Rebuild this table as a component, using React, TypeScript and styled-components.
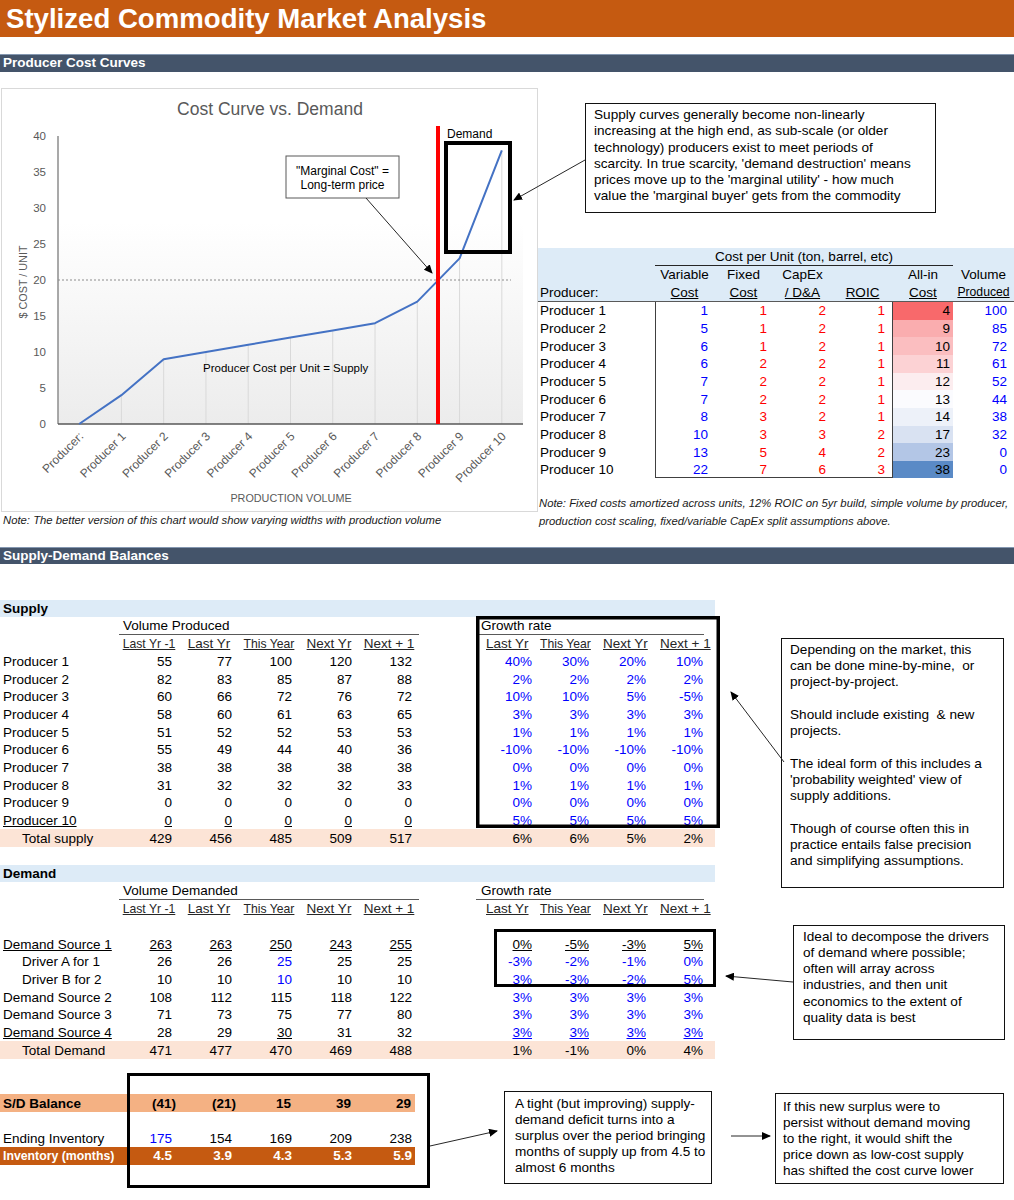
import React from 'react';
import styled, { createGlobalStyle } from 'styled-components';

const R = 17.67;
const FONT = '"Liberation Sans", Arial, sans-serif';
const BLUE = '#0000ff';
const RED = '#ff0000';

const GlobalStyle = createGlobalStyle`
  *, *::before, *::after { box-sizing: border-box; }
  html, body { margin: 0; padding: 0; background: #fff; }
  body { font-family: ${FONT}; font-size: 13.5px; color: #000; }
`;

const Page = styled.div`
  position: relative;
  width: 1014px;
  height: 1200px;
  overflow: hidden;
`;

const TitleBar = styled.h1`
  margin: 0;
  height: 37px;
  padding-left: 6px;
  background: #c55a11;
  color: #fff;
  font-size: 27.6px;
  font-weight: 700;
  line-height: 38px;
  white-space: nowrap;
`;

const SectionBar = styled.h2<{ $mt: number }>`
  margin: ${p => p.$mt}px 0 0;
  height: ${R}px;
  padding-left: 3px;
  background: #44546a;
  border-top: 1px solid #8497b0;
  color: #fff;
  font-size: 13.5px;
  font-weight: 700;
  line-height: ${R - 1}px;
  white-space: nowrap;
`;

/* ---------- top area ---------- */
const TopArea = styled.div`
  display: flex;
  align-items: flex-start;
  margin-top: 16.3px;
`;

const ChartCol = styled.div`
  width: 538px;
  flex: none;
  padding-left: 1px;
  display: flex;
  flex-direction: column;
`;

const ChartFrame = styled.div`
  width: 537px;
  height: 424px;
  border: 1px solid #d9d9d9;
  background: #fff;
  svg { display: block; }
`;

const Note = styled.div<{ $pl: number }>`
  padding-left: ${p => p.$pl}px;
  font-style: italic;
  font-size: 11.3px;
  line-height: ${R}px;
  color: #1a1a1a;
  white-space: nowrap;
`;

const NoteBlock = styled.div`
  margin-top: 17px;
`;

const RightCol = styled.div`
  width: 476px;
  flex: none;
  display: flex;
  flex-direction: column;
`;

const Callout = styled.div<{ $w: number; $h: number; $mt: number; $ml: number; $pad: string; $lh: number }>`
  flex: none;
  width: ${p => p.$w}px;
  height: ${p => p.$h}px;
  margin-top: ${p => p.$mt}px;
  margin-left: ${p => p.$ml}px;
  padding: ${p => p.$pad};
  border: 1.5px solid #111;
  background: #fff;
  font-size: 13.6px;
  line-height: ${p => p.$lh}px;
  white-space: pre;
  color: #000;
`;

/* ---------- cost table ---------- */
const CT_COLS = '117px 59px 59px 59px 61px 60px 61px';

const CostTable = styled.div`
  margin-top: 35px;
  width: 476px;
`;

const CostHead = styled.div`
  display: grid;
  grid-template-columns: ${CT_COLS};
  grid-template-rows: repeat(3, ${R}px);
  background: #ddebf7;
  border-bottom: 1px solid #595959;
`;

const HeadCell = styled.div<{ $col: string; $row: number; $align?: 'l' | 'c'; $ul?: boolean; $size?: number; $line?: boolean }>`
  grid-column: ${p => p.$col};
  grid-row: ${p => p.$row};
  display: flex;
  align-items: center;
  justify-content: ${p => (p.$align === 'l' ? 'flex-start' : 'center')};
  padding-left: ${p => (p.$align === 'l' ? 2 : 0)}px;
  font-size: ${p => p.$size ?? 13.5}px;
  text-decoration: ${p => (p.$ul ? 'underline' : 'none')};
  text-underline-offset: 1px;
  border-bottom: ${p => (p.$line ? '1.5px solid #262626' : '0')};
  white-space: nowrap;
`;

const CostRow = styled.div`
  display: grid;
  grid-template-columns: ${CT_COLS};
  height: ${R}px;
`;

const CostCell = styled.div<{ $color?: string; $bg?: string; $pr?: number; $pl?: number; $bl?: boolean; $br?: boolean; $bb?: boolean; $left?: boolean }>`
  display: flex;
  align-items: center;
  justify-content: ${p => (p.$left ? 'flex-start' : 'flex-end')};
  padding-right: ${p => p.$pr ?? 0}px;
  padding-left: ${p => p.$pl ?? 0}px;
  color: ${p => p.$color ?? '#000'};
  background: ${p => p.$bg ?? 'transparent'};
  border-left: ${p => (p.$bl ? '1px solid #404040' : '0')};
  border-right: ${p => (p.$br ? '1px solid #404040' : '0')};
  border-bottom: ${p => (p.$bb ? '1px solid #404040' : '0')};
  white-space: nowrap;
`;

/* ---------- supply / demand sheet ---------- */
const SHEET_COLS = '119px repeat(5, 60px) 57px repeat(4, 57px) 11px';
const BAL_COLS = '119px repeat(4, 60px) 56px';

const SDArea = styled.div`
  padding-top: ${2 * R}px;
`;

const UpperGrid = styled.div`
  display: grid;
  grid-template-columns: 715px 1fr;
  align-items: start;
`;

const LeftCol = styled.div`
  display: flex;
  flex-direction: column;
`;

const RightStack = styled.div`
  display: flex;
  flex-direction: column;
`;

const SheetRow = styled.div<{ $bg?: string }>`
  display: grid;
  grid-template-columns: ${SHEET_COLS};
  height: ${R}px;
  background: ${p => p.$bg ?? 'transparent'};
`;

const BalRow = styled.div<{ $bg?: string }>`
  display: grid;
  grid-template-columns: ${BAL_COLS};
  height: ${R}px;
  background: ${p => p.$bg ?? 'transparent'};
`;

type CellProps = {
  $col?: string;
  $align?: 'l' | 'r' | 'c';
  $pl?: number;
  $pr?: number;
  $color?: string;
  $bold?: boolean;
  $size?: number;
  $ul?: boolean;
  $line?: boolean;
};

const Cell = styled.div<CellProps>`
  grid-column: ${p => p.$col ?? 'auto'};
  display: flex;
  align-items: center;
  justify-content: ${p => (p.$align === 'r' ? 'flex-end' : p.$align === 'c' ? 'center' : 'flex-start')};
  padding-left: ${p => p.$pl ?? 0}px;
  padding-right: ${p => p.$pr ?? 0}px;
  color: ${p => p.$color ?? '#000'};
  font-weight: ${p => (p.$bold ? 700 : 400)};
  font-size: ${p => p.$size ?? 13.5}px;
  text-decoration: ${p => (p.$ul ? 'underline' : 'none')};
  text-underline-offset: 1px;
  white-space: nowrap;
  border-bottom: ${p => (p.$line ? '1px solid #595959' : '0')};
`;

const BottomRow = styled.div`
  display: flex;
  align-items: flex-start;
`;

const BalanceTable = styled.div`
  width: 415px;
  flex: none;
  display: flex;
  flex-direction: column;
`;

const Overlay = styled.svg`
  position: absolute;
  left: 0;
  top: 0;
  pointer-events: none;
`;

/* ---------- data ---------- */
const parse = (raw: string) => {
  let s = raw;
  let ul = false;
  let blue = false;
  while (s[0] === '_' || s[0] === '*') {
    if (s[0] === '_') ul = true;
    else blue = true;
    s = s.slice(1);
  }
  return { t: s, ul, blue };
};

const supplyRows: [string, string, string][] = [
  ['Producer 1', '55 77 100 120 132', '*40% *30% *20% *10%'],
  ['Producer 2', '82 83 85 87 88', '*2% *2% *2% *2%'],
  ['Producer 3', '60 66 72 76 72', '*10% *10% *5% *-5%'],
  ['Producer 4', '58 60 61 63 65', '*3% *3% *3% *3%'],
  ['Producer 5', '51 52 52 53 53', '*1% *1% *1% *1%'],
  ['Producer 6', '55 49 44 40 36', '*-10% *-10% *-10% *-10%'],
  ['Producer 7', '38 38 38 38 38', '*0% *0% *0% *0%'],
  ['Producer 8', '31 32 32 32 33', '*1% *1% *1% *1%'],
  ['Producer 9', '0 0 0 0 0', '*0% *0% *0% *0%'],
  ['_Producer 10', '_0 _0 _0 _0 _0', '_*5% _*5% _*5% _*5%'],
];

const demandRows: [string, number, string, string][] = [
  ['_Demand Source 1', 3, '_263 _263 _250 _243 _255', '_0% _-5% _-3% _5%'],
  ['Driver A for 1', 22, '26 26 *25 25 25', '*-3% *-2% *-1% *0%'],
  ['Driver B for 2', 22, '10 10 *10 10 10', '_*3% _*-3% _*-2% _*5%'],
  ['Demand Source 2', 3, '108 112 115 118 122', '*3% *3% *3% *3%'],
  ['Demand Source 3', 3, '71 73 75 77 80', '*3% *3% *3% *3%'],
  ['_Demand Source 4', 3, '28 29 _30 31 32', '_*3% _*3% _*3% _*3%'],
];

const costRows = [
  [1, 1, 2, 1, 4, 100],
  [5, 1, 2, 1, 9, 85],
  [6, 1, 2, 1, 10, 72],
  [6, 2, 2, 1, 11, 61],
  [7, 2, 2, 1, 12, 52],
  [7, 2, 2, 1, 13, 44],
  [8, 3, 2, 1, 14, 38],
  [10, 3, 3, 2, 17, 32],
  [13, 5, 4, 2, 23, 0],
  [22, 7, 6, 3, 38, 0],
];
const heat = ['#f8696b', '#faadaf', '#fbbec0', '#fcd2d4', '#fcedef', '#fbfbfe', '#edf1f9', '#d9e2f2', '#b3c6e6', '#5a8ac6'];

const VCOLS = ['2', '3', '4', '5', '6'];
const GCOLS = ['8', '9', '10', '11'];

const Values: React.FC<{ spec: string; cols: string[]; pr: number }> = ({ spec, cols, pr }) => (
  <>
    {spec.split(' ').map((raw, i) => {
      const v = parse(raw);
      return (
        <Cell key={i} $col={cols[i]} $align="r" $pr={pr} $ul={v.ul} $color={v.blue ? BLUE : '#000'}>
          {v.t}
        </Cell>
      );
    })}
  </>
);

const VolHeaders: React.FC = () => (
  <>
    <Cell $col="2" $align="c" $ul $size={12.2} $color="#262626">Last Yr -1</Cell>
    <Cell $col="3" $align="c" $ul $color="#262626">Last Yr</Cell>
    <Cell $col="4" $align="c" $ul $size={12.2} $color="#262626">This Year</Cell>
    <Cell $col="5" $align="c" $ul $color="#262626">Next Yr</Cell>
    <Cell $col="6" $align="c" $ul $color="#262626">Next + 1</Cell>
    <Cell $col="8" $pl={10} $ul $color="#262626">Last Yr</Cell>
    <Cell $col="9" $pl={7} $ul $size={12.2} $color="#262626">This Year</Cell>
    <Cell $col="10" $pl={13} $ul $color="#262626">Next Yr</Cell>
    <Cell $col="11" $pl={13} $ul $color="#262626">Next + 1</Cell>
  </>
);

/* ---------- chart ---------- */
const cats = ['Producer:', 'Producer 1', 'Producer 2', 'Producer 3', 'Producer 4', 'Producer 5', 'Producer 6', 'Producer 7', 'Producer 8', 'Producer 9', 'Producer 10'];
const curve = [0, 4, 9, 10, 11, 12, 13, 14, 17, 23, 38];
const X0 = 58;
const XW = 42.27;
const Y0 = 424;
const YS = 7.2;
const cx = (i: number) => X0 + (i + 0.5) * XW;
const cy = (v: number) => Y0 - v * YS;
const GRAY = '#595959';

const CostChart: React.FC = () => (
  <svg width={535} height={422} viewBox="2 89 535 422" fontFamily={FONT}>
    <defs>
      <linearGradient id="plotFill" x1="0" y1="0" x2="0" y2="1">
        <stop offset="0" stopColor="#ffffff" />
        <stop offset="0.3" stopColor="#ffffff" />
        <stop offset="1" stopColor="#ececec" />
      </linearGradient>
      <marker id="chartHead" markerWidth="9" markerHeight="8" refX="8" refY="4" orient="auto" markerUnits="userSpaceOnUse">
        <path d="M0,0 L9,4 L0,8 z" fill="#000" />
      </marker>
    </defs>
    <text x={270} y={109} textAnchor="middle" dominantBaseline="central" fontSize={17.5} fill={GRAY}>
      Cost Curve vs. Demand
    </text>
    <rect x={X0} y={136} width={465} height={288} fill="url(#plotFill)" />
    {curve.map((v, i) =>
      i === 0 ? null : <line key={i} x1={cx(i)} y1={cy(v)} x2={cx(i)} y2={Y0} stroke="#d9d9d9" strokeWidth={1} />
    )}
    <line x1={X0} y1={cy(20)} x2={511} y2={cy(20)} stroke="#8c8c8c" strokeWidth={1} strokeDasharray="2 2" />
    {[0, 5, 10, 15, 20, 25, 30, 35, 40].map(v => (
      <text key={v} x={46} y={cy(v)} textAnchor="end" dominantBaseline="central" fontSize={11.5} fill={GRAY}>
        {v}
      </text>
    ))}
    <line x1={X0} y1={136} x2={X0} y2={Y0} stroke="#8c8c8c" strokeWidth={1.5} />
    <line x1={X0} y1={Y0} x2={523} y2={Y0} stroke="#595959" strokeWidth={1.5} />
    <polyline
      points={curve.map((v, i) => `${cx(i)},${cy(v)}`).join(' ')}
      fill="none"
      stroke="#4472c4"
      strokeWidth={2}
      strokeLinejoin="round"
    />
    <line x1={438} y1={126} x2={438} y2={Y0} stroke={RED} strokeWidth={4} />
    <text x={447} y={134} dominantBaseline="central" fontSize={12} fill="#000">
      Demand
    </text>
    <rect x={446} y={143} width={64} height={109} fill="none" stroke="#000" strokeWidth={4} />
    <rect x={286} y={156} width={113} height={42} fill="#fff" stroke={GRAY} strokeWidth={1} />
    <text x={342.5} y={171} textAnchor="middle" dominantBaseline="central" fontSize={12} fill="#000">
      "Marginal Cost" =
    </text>
    <text x={342.5} y={185} textAnchor="middle" dominantBaseline="central" fontSize={12} fill="#000">
      Long-term price
    </text>
    <line x1={366} y1={198} x2={432} y2={273} stroke="#262626" strokeWidth={1} markerEnd="url(#chartHead)" />
    <text x={203} y={368} dominantBaseline="central" fontSize={11.5} fill="#000">
      Producer Cost per Unit = Supply
    </text>
    {cats.map((c, i) => (
      <text
        key={c}
        x={cx(i) + 5}
        y={437}
        textAnchor="end"
        fontSize={12}
        fill={GRAY}
        transform={`rotate(-45 ${cx(i) + 5} 437)`}
      >
        {c}
      </text>
    ))}
    <text x={291} y={498} textAnchor="middle" dominantBaseline="central" fontSize={10.8} fill={GRAY}>
      PRODUCTION VOLUME
    </text>
    <text
      x={23}
      y={282}
      textAnchor="middle"
      dominantBaseline="central"
      fontSize={10.8}
      fill={GRAY}
      transform="rotate(-90 23 282)"
    >
      $ COST / UNIT
    </text>
  </svg>
);

/* ---------- page ---------- */
const App: React.FC = () => (
  <>
    <GlobalStyle />
    <Page>
      <TitleBar>Stylized Commodity Market Analysis</TitleBar>
      <SectionBar $mt={17}>Producer Cost Curves</SectionBar>

      <TopArea>
        <ChartCol>
          <ChartFrame>
            <CostChart />
          </ChartFrame>
          <Note $pl={2}>Note: The better version of this chart would show varying widths with production volume</Note>
        </ChartCol>

        <RightCol>
          <Callout $w={351} $h={110} $mt={15} $ml={47} $pad="3px 8px" $lh={16.3}>
            {`Supply curves generally become non-linearly
increasing at the high end, as sub-scale (or older
technology) producers exist to meet periods of
scarcity. In true scarcity, 'demand destruction' means
prices move up to the 'marginal utility' - how much
value the 'marginal buyer' gets from the commodity`}
          </Callout>

          <CostTable>
            <CostHead>
              <HeadCell $col="2 / 7" $row={1} $line>Cost per Unit (ton, barrel, etc)</HeadCell>
              <HeadCell $col="2" $row={2}>Variable</HeadCell>
              <HeadCell $col="3" $row={2}>Fixed</HeadCell>
              <HeadCell $col="4" $row={2}>CapEx</HeadCell>
              <HeadCell $col="6" $row={2}>All-in</HeadCell>
              <HeadCell $col="7" $row={2}>Volume</HeadCell>
              <HeadCell $col="1" $row={3} $align="l">Producer:</HeadCell>
              <HeadCell $col="2" $row={3} $ul>Cost</HeadCell>
              <HeadCell $col="3" $row={3} $ul>Cost</HeadCell>
              <HeadCell $col="4" $row={3} $ul>/ D&amp;A</HeadCell>
              <HeadCell $col="5" $row={3} $ul>ROIC</HeadCell>
              <HeadCell $col="6" $row={3} $ul>Cost</HeadCell>
              <HeadCell $col="7" $row={3} $ul $size={12.2}>Produced</HeadCell>
            </CostHead>
            {costRows.map((r, i) => {
              const last = i === costRows.length - 1;
              return (
                <CostRow key={i}>
                  <CostCell $left $pl={2}>Producer {i + 1}</CostCell>
                  <CostCell $color={BLUE} $pr={6} $bl $bb={last}>{r[0]}</CostCell>
                  <CostCell $color={RED} $pr={6} $bb={last}>{r[1]}</CostCell>
                  <CostCell $color={RED} $pr={6} $bb={last}>{r[2]}</CostCell>
                  <CostCell $color={RED} $pr={7} $br $bb={last}>{r[3]}</CostCell>
                  <CostCell $bg={heat[i]} $pr={3}>{r[4]}</CostCell>
                  <CostCell $color={BLUE} $pr={7}>{r[5]}</CostCell>
                </CostRow>
              );
            })}
          </CostTable>
          <NoteBlock>
            <Note $pl={1}>Note: Fixed costs amortized across units, 12% ROIC on 5yr build, simple volume by producer,</Note>
            <Note $pl={1}>production cost scaling, fixed/variable CapEx split assumptions above.</Note>
          </NoteBlock>
        </RightCol>
      </TopArea>

      <SectionBar $mt={16}>Supply-Demand Balances</SectionBar>

      <SDArea>
        <UpperGrid>
          <LeftCol>
            {/* Supply */}
            <SheetRow $bg="#ddebf7">
              <Cell $col="1 / 3" $pl={3} $bold>Supply</Cell>
            </SheetRow>
            <SheetRow>
              <Cell $col="2 / 7" $pl={4} $line>Volume Produced</Cell>
              <Cell $col="8 / 12" $pl={5} $line>Growth rate</Cell>
            </SheetRow>
            <SheetRow>
              <VolHeaders />
            </SheetRow>
            {supplyRows.map(([label, vals, growth]) => {
              const l = parse(label);
              return (
                <SheetRow key={l.t}>
                  <Cell $col="1" $pl={3} $ul={l.ul}>{l.t}</Cell>
                  <Values spec={vals} cols={VCOLS} pr={7} />
                  <Values spec={growth} cols={GCOLS} pr={1} />
                </SheetRow>
              );
            })}
            <SheetRow $bg="#fce4d6">
              <Cell $col="1" $pl={22}>Total supply</Cell>
              <Values spec="429 456 485 509 517" cols={VCOLS} pr={7} />
              <Values spec="6% 6% 5% 2%" cols={GCOLS} pr={1} />
            </SheetRow>
            <SheetRow />

            {/* Demand */}
            <SheetRow $bg="#ddebf7">
              <Cell $col="1 / 3" $pl={3} $bold>Demand</Cell>
            </SheetRow>
            <SheetRow>
              <Cell $col="2 / 7" $pl={4} $line>Volume Demanded</Cell>
              <Cell $col="8 / 12" $pl={5} $line>Growth rate</Cell>
            </SheetRow>
            <SheetRow>
              <VolHeaders />
            </SheetRow>
            <SheetRow />
            {demandRows.map(([label, pl, vals, growth]) => {
              const l = parse(label);
              return (
                <SheetRow key={l.t}>
                  <Cell $col="1" $pl={pl} $ul={l.ul}>{l.t}</Cell>
                  <Values spec={vals} cols={VCOLS} pr={7} />
                  <Values spec={growth} cols={GCOLS} pr={1} />
                </SheetRow>
              );
            })}
            <SheetRow $bg="#fce4d6">
              <Cell $col="1" $pl={22}>Total Demand</Cell>
              <Values spec="471 477 470 469 488" cols={VCOLS} pr={7} />
              <Values spec="1% -1% 0% 4%" cols={GCOLS} pr={1} />
            </SheetRow>
          </LeftCol>

          <RightStack>
            <Callout $w={223} $h={250} $mt={37.7} $ml={66} $pad="3px 8px" $lh={16.3}>
              {`Depending on the market, this
can be done mine-by-mine,  or
project-by-project.

Should include existing  & new
projects.

The ideal form of this includes a
'probability weighted' view of
supply additions.

Though of course often this in
practice entails false precision
and simplifying assumptions.`}
            </Callout>
            <Callout $w={212} $h={115} $mt={37} $ml={78} $pad="3px 9px" $lh={16.3}>
              {`Ideal to decompose the drivers
of demand where possible;
often will array across
industries, and then unit
economics to the extent of
quality data is best`}
            </Callout>
          </RightStack>
        </UpperGrid>

        <BottomRow>
          <BalanceTable>
            <BalRow />
            <BalRow />
            <BalRow $bg="#f4b183">
              <Cell $col="1" $pl={3} $bold>S/D Balance</Cell>
              <Cell $col="2" $align="r" $pr={3} $bold>(41)</Cell>
              <Cell $col="3" $align="r" $pr={3} $bold>(21)</Cell>
              <Cell $col="4" $align="r" $pr={8} $bold>15</Cell>
              <Cell $col="5" $align="r" $pr={8} $bold>39</Cell>
              <Cell $col="6" $align="r" $pr={4} $bold>29</Cell>
            </BalRow>
            <BalRow />
            <BalRow>
              <Cell $col="1" $pl={3}>Ending Inventory</Cell>
              <Cell $col="2" $align="r" $pr={7} $color={BLUE}>175</Cell>
              <Cell $col="3" $align="r" $pr={7}>154</Cell>
              <Cell $col="4" $align="r" $pr={7}>169</Cell>
              <Cell $col="5" $align="r" $pr={7}>209</Cell>
              <Cell $col="6" $align="r" $pr={3}>238</Cell>
            </BalRow>
            <BalRow $bg="#c55a11">
              <Cell $col="1" $pl={3} $bold $size={12.3} $color="#fff">Inventory (months)</Cell>
              <Cell $col="2" $align="r" $pr={7} $bold $color="#fff">4.5</Cell>
              <Cell $col="3" $align="r" $pr={7} $bold $color="#fff">3.9</Cell>
              <Cell $col="4" $align="r" $pr={7} $bold $color="#fff">4.3</Cell>
              <Cell $col="5" $align="r" $pr={7} $bold $color="#fff">5.3</Cell>
              <Cell $col="6" $align="r" $pr={3} $bold $color="#fff">5.9</Cell>
            </BalRow>
          </BalanceTable>
          <Callout $w={208} $h={93} $mt={32.3} $ml={89} $pad="4px 10px" $lh={16}>
            {`A tight (but improving) supply-
demand deficit turns into a
surplus over the period bringing
months of supply up from 4.5 to
almost 6 months`}
          </Callout>
          <Callout $w={229} $h={91} $mt={34.3} $ml={63} $pad="5px 7px" $lh={16}>
            {`If this new surplus were to
persist without demand moving
to the right, it would shift the
price down as low-cost supply
has shifted the cost curve lower`}
          </Callout>
        </BottomRow>
      </SDArea>

      <Overlay width={1014} height={1200} viewBox="0 0 1014 1200">
        <defs>
          <marker id="pageHead" markerWidth="9" markerHeight="8" refX="8" refY="4" orient="auto" markerUnits="userSpaceOnUse">
            <path d="M0,0 L9,4 L0,8 z" fill="#000" />
          </marker>
        </defs>
        <rect x={477.75} y={617.75} width={240.5} height={208.5} fill="none" stroke="#000" strokeWidth={3.5} />
        <rect x={495.5} y={930.5} width={219} height={55} fill="none" stroke="#000" strokeWidth={3} />
        <rect x={128.5} y={1074.5} width={300} height={112} fill="none" stroke="#000" strokeWidth={3} />
        <line x1={585} y1={160} x2={514} y2={200} stroke="#262626" strokeWidth={1} markerEnd="url(#pageHead)" />
        <line x1={784} y1={762} x2={731} y2={692} stroke="#262626" strokeWidth={1} markerEnd="url(#pageHead)" />
        <line x1={793} y1={982} x2={726} y2={976} stroke="#262626" strokeWidth={1} markerEnd="url(#pageHead)" />
        <line x1={430} y1={1146} x2={497} y2={1131} stroke="#262626" strokeWidth={1} markerEnd="url(#pageHead)" />
        <line x1={731} y1={1136} x2={770} y2={1136} stroke="#262626" strokeWidth={1} markerEnd="url(#pageHead)" />
      </Overlay>
    </Page>
  </>
);

export default App;
